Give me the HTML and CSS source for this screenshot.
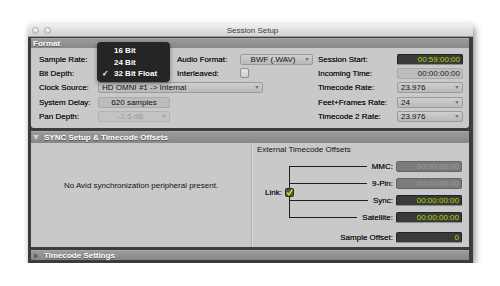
FILE: index.html
```html
<!DOCTYPE html>
<html lang="en">
<head>
    <meta charset="UTF-8">
    <title>Session Setup</title>
    <link rel="stylesheet" href="styles.css">
</head>
<body>

<div class="window">
    <div class="titlebar">
        <div class="lights">
            <span class="light"></span>
            <span class="light"></span>
        </div>
        <div class="title">Session Setup</div>
    </div>

    <div class="frame">
        <!-- Format -->
        <section class="panel">
            <div class="panel-head">Format</div>
            <div class="format-body">
                <div class="label">Sample Rate:</div>
                <div class="label c3">Audio Format:</div>
                <div class="select centered w73">BWF (.WAV)</div>
                <div class="label">Session Start:</div>
                <div class="tc dark">00:59:00:00</div>

                <div class="label">Bit Depth:</div>
                <div class="label c3">Interleaved:</div>
                <div class="check"></div>
                <div class="label">Incoming Time:</div>
                <div class="tc light-field">00:00:00:00</div>

                <div class="label">Clock Source:</div>
                <div class="select wide">HD OMNI #1 -&gt; Internal</div>
                <div class="label">Timecode Rate:</div>
                <div class="select w66">23.976</div>

                <div class="label">System Delay:</div>
                <div class="box w72">620 samples</div>
                <div class="label c5">Feet+Frames Rate:</div>
                <div class="select w66">24</div>

                <div class="label">Pan Depth:</div>
                <div class="select centered w72 disabled">-2.5 dB</div>
                <div class="label c5">Timecode 2 Rate:</div>
                <div class="select w66">23.976</div>

                <ul class="popup">
                    <li>16 Bit</li>
                    <li>24 Bit</li>
                    <li class="checked">32 Bit Float</li>
                </ul>
            </div>
        </section>

        <!-- SYNC -->
        <section class="panel">
            <div class="panel-head tall"><span class="tri down"></span>SYNC Setup &amp; Timecode Offsets</div>
            <div class="sync-body">
                <div class="sync-left">No Avid synchronization peripheral present.</div>
                <div class="sync-right">
                    <div class="offsets-title">External Timecode Offsets</div>
                    <div class="link-block">
                        <span class="link-label">Link:</span>
                        <svg class="link-check" width="9" height="9" viewBox="0 0 9 9">
                            <rect x="0.5" y="0.5" width="8" height="8" rx="1" fill="#55552f" stroke="#2e2e2e"/>
                            <path d="M2 4.5 L3.8 6.6 L7.2 1.8" fill="none" stroke="#b6ea1c" stroke-width="1.6"/>
                        </svg>
                        <div class="tree">
                            <div class="tree-row">
                                <span class="branch"></span>
                                <span class="olabel">MMC:</span>
                                <div class="tc off">00:00:00:00</div>
                            </div>
                            <div class="tree-row">
                                <span class="branch"></span>
                                <span class="olabel">9-Pin:</span>
                                <div class="tc off">00:00:00:00</div>
                            </div>
                            <div class="tree-row">
                                <span class="branch"></span>
                                <span class="olabel">Sync:</span>
                                <div class="tc dark">00:00:00:00</div>
                            </div>
                            <div class="tree-row">
                                <span class="branch"></span>
                                <span class="olabel">Satellite:</span>
                                <div class="tc dark">00:00:00:00</div>
                            </div>
                        </div>
                    </div>
                    <div class="offset-row">
                        <span class="olabel">Sample Offset:</span>
                        <div class="tc dark">0</div>
                    </div>
                </div>
            </div>
        </section>

        <!-- Timecode Settings -->
        <section class="panel">
            <div class="panel-head"><span class="tri right"></span>Timecode Settings</div>
        </section>
    </div>
</div>

</body>
</html>
```

FILE: styles.css
```css
* {
    box-sizing: border-box;
}

body {
    margin: 0;
    background-color: #fff;
    font-family: "Liberation Sans", Arial, sans-serif;
    font-size: 8px;
    color: #121212;
}

.window {
    width: 445px;
    margin: 24px 0 0 28px;
    border-radius: 3px 3px 0 0;
    box-shadow: 2px 3px 7px rgba(0, 0, 0, .45);
}

.titlebar {
    height: 13px;
    display: grid;
    grid-template-columns: 1fr auto 1fr;
    align-items: center;
    padding-left: 4px;
    background: linear-gradient(#efefef, #d3d3d3);
    border-bottom: 1px solid #9c9c9c;
    border-radius: 3px 3px 0 0;
}

.lights {
    display: flex;
    gap: 5px;
}

.light {
    width: 7px;
    height: 7px;
    border-radius: 50%;
    border: 1px solid #a2a2a2;
    background: linear-gradient(#f7f7f7, #d9d9d9);
}

.title {
    color: #3a3a3a;
    font-size: 8px;
}

.frame {
    display: flex;
    flex-direction: column;
    gap: 3px;
    padding: 1px 4px 3px 3px;
    background-color: #3c3c3c;
}

.panel-head {
    height: 10px;
    line-height: 10px;
    padding-left: 2px;
    display: flex;
    align-items: center;
    background: linear-gradient(#9a9a9a, #888);
    border-top: 1px solid #a8a8a8;
    color: #fff;
    font-weight: bold;
    text-shadow: 0 1px 0 #555;
}

.panel-head.tall {
    height: 12px;
}

.tri {
    width: 0;
    height: 0;
    margin-right: 5px;
}

.tri.down {
    border-left: 3px solid transparent;
    border-right: 3px solid transparent;
    border-top: 5px solid #cfcfcf;
}

.tri.right {
    border-top: 3px solid transparent;
    border-bottom: 3px solid transparent;
    border-left: 5px solid #646464;
    margin-left: 1px;
}

/* format */

.format-body {
    position: relative;
    height: 80px;
    padding: 4px 0 0 8px;
    display: grid;
    grid-template-columns: 59px 79px 63px 78px 79px 66px;
    grid-auto-rows: 14.3px;
    align-items: center;
    background-color: #c9c9c9;
    border-radius: 0 0 3px 3px;
}

.label,
.olabel,
.link-label {
    white-space: nowrap;
    text-shadow: 0 0 .4px rgba(0, 0, 0, .7);
}

.c3 {
    grid-column: 3;
}

.c5 {
    grid-column: 5;
}

.select,
.box,
.tc {
    height: 11px;
    line-height: 10px;
    border-radius: 2px;
    white-space: nowrap;
}

.select {
    position: relative;
    padding: 0 10px 0 3px;
    background: linear-gradient(#cfcfcf, #b9b9b9);
    border: 1px solid #9a9a9a;
}

.select::after {
    content: "";
    position: absolute;
    right: 3px;
    top: 3px;
    border-left: 2.5px solid transparent;
    border-right: 2.5px solid transparent;
    border-top: 3px solid #7a7a7a;
}

.select.centered {
    text-align: center;
}

.select.disabled {
    color: #999;
    background: #c3c3c3;
    border-color: #b3b3b3;
}

.select.disabled::after {
    border-top-color: #a5a5a5;
}

.w66 {
    width: 66px;
}

.w72 {
    width: 72px;
}

.w73 {
    width: 73px;
}

.wide {
    grid-column: 2 / 5;
    width: 165px;
}

.box {
    text-align: center;
    background-color: #bcbcbc;
    border: 1px solid #aaa;
}

.check {
    width: 9px;
    height: 10px;
    border: 1px solid #8e8e8e;
    border-radius: 2px;
    background: linear-gradient(#e4e4e4, #cfcfcf);
}

.tc {
    width: 66px;
    padding-right: 2px;
    text-align: right;
}

.tc.dark {
    background-color: #3a3a3a;
    border: 1px solid #222;
    border-bottom-color: #8a8a8a;
    color: #a9dc00;
}

.tc.off {
    background-color: #7b7b7b;
    border: 1px solid #666;
    color: #9c9c9c;
}

.tc.light-field {
    background-color: #bdbdbd;
    border: 1px solid #aaa;
    color: #222;
}

.popup {
    position: absolute;
    left: 66px;
    top: -6px;
    width: 73px;
    height: 40px;
    margin: 0;
    padding: 3px 0 0 17px;
    list-style: none;
    background-color: #252525;
    border-radius: 4px;
    box-shadow: 0 2px 4px rgba(0, 0, 0, .4);
    color: #fff;
    font-weight: bold;
}

.popup li {
    position: relative;
    height: 11.5px;
    line-height: 11.5px;
}

.popup .checked::before {
    content: "\2713";
    position: absolute;
    left: -12px;
}

/* sync */

.sync-body {
    height: 104px;
    display: flex;
    background-color: #c9c9c9;
}

.sync-left {
    width: 221px;
    padding-top: 38px;
    text-align: center;
    line-height: 10px;
    border-right: 1px solid #adadad;
}

.sync-right {
    flex: 1;
    padding: 2px 7px 0 4px;
    border-left: 1px solid #dadada;
}

.offsets-title {
    line-height: 10px;
    margin-bottom: 3px;
}

.link-block {
    display: flex;
    align-items: center;
    padding-left: 8px;
}

.link-label {
    margin-right: 3px;
}

.link-check {
    position: relative;
    z-index: 1;
    margin-right: -5px;
}

.tree {
    flex: 1;
    position: relative;
}

.tree::before {
    content: "";
    position: absolute;
    left: 0;
    top: 8px;
    bottom: 8px;
    border-left: 1px solid #1e1e1e;
}

.tree-row {
    height: 17px;
    display: flex;
    align-items: center;
}

.branch {
    flex: 1;
    height: 1px;
    margin-right: 5px;
    background-color: #1e1e1e;
}

.olabel {
    margin-right: 3px;
}

.offset-row {
    margin-top: 5px;
    height: 13px;
    display: flex;
    align-items: center;
    justify-content: flex-end;
}
```
